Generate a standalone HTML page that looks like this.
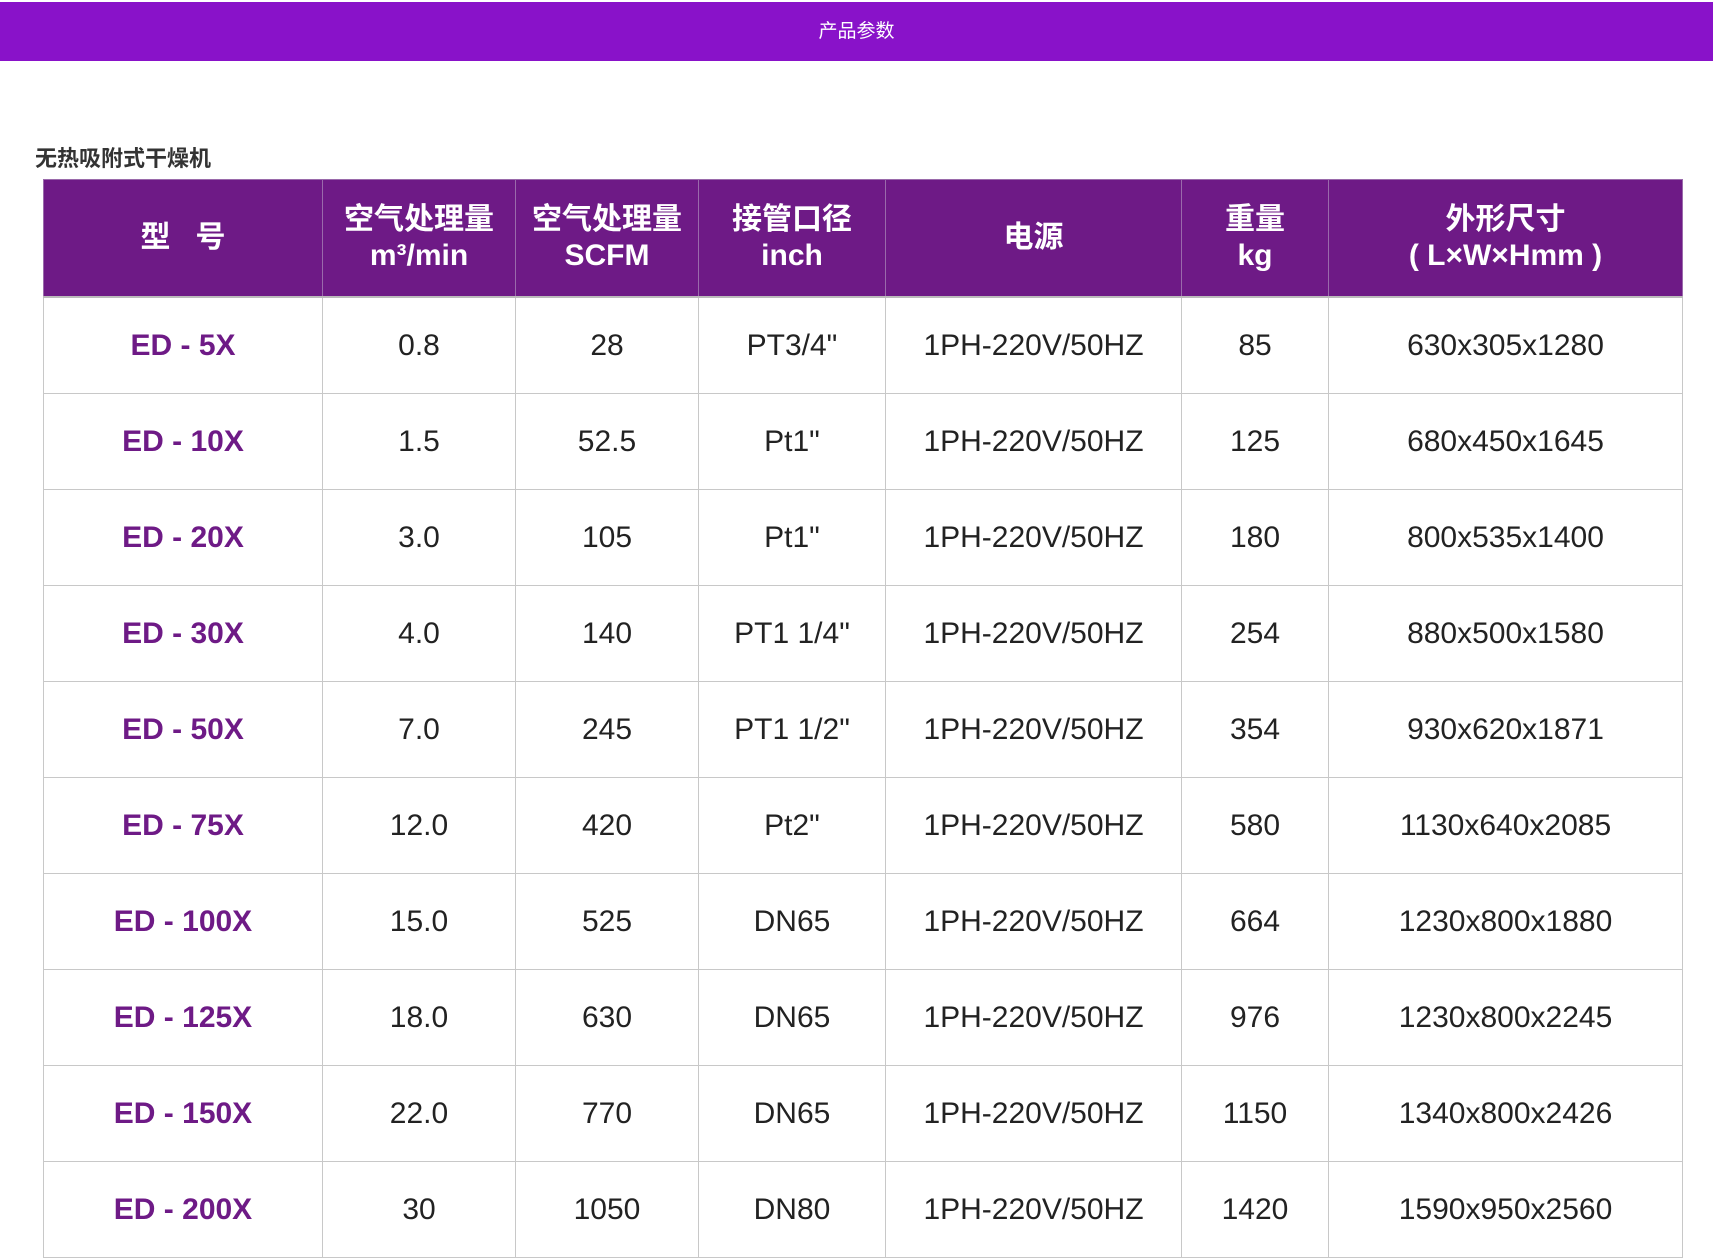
<!DOCTYPE html>
<html><head><meta charset="utf-8"><style>
body{margin:0;background:#fff;width:1713px;height:1258px;overflow:hidden;font-family:"Liberation Sans","Noto Sans CJK SC",sans-serif;}
.bar{position:absolute;top:2px;left:0;width:1713px;height:59px;background:#8912c9;color:#fff;text-align:center;line-height:59px;font-size:19px;}
h2{position:absolute;left:35px;top:141px;margin:0;font-size:22px;font-weight:bold;color:#333;}
table{position:absolute;left:43px;top:179px;border-collapse:collapse;table-layout:fixed;}
td,th{border:1px solid #c8c8c8;text-align:center;padding:0;}
th{background:#6e1a86;color:#fff;font-size:30px;font-weight:bold;line-height:36px;height:116px;border-color:#9a6aab;border-bottom:2px solid #bbb}
td{height:95px;font-size:30px;color:#222;}
td.m{color:#6e1a86;font-weight:bold;}
</style></head><body>
<div class="bar">产品参数</div>
<h2>无热吸附式干燥机</h2>
<table>
<colgroup><col style="width:279px"><col style="width:193px"><col style="width:183px"><col style="width:187px"><col style="width:296px"><col style="width:147px"><col style="width:354px"></colgroup>
<tr><th>型&nbsp;&nbsp;&nbsp;号</th><th>空气处理量<br>m³/min</th><th>空气处理量<br>SCFM</th><th>接管口径<br>inch</th><th>电源</th><th>重量<br>kg</th><th>外形尺寸<br>( L×W×Hmm )</th></tr>
<tr><td class="m">ED - 5X</td><td>0.8</td><td>28</td><td>PT3/4"</td><td>1PH-220V/50HZ</td><td>85</td><td>630x305x1280</td></tr>
<tr><td class="m">ED - 10X</td><td>1.5</td><td>52.5</td><td>Pt1"</td><td>1PH-220V/50HZ</td><td>125</td><td>680x450x1645</td></tr>
<tr><td class="m">ED - 20X</td><td>3.0</td><td>105</td><td>Pt1"</td><td>1PH-220V/50HZ</td><td>180</td><td>800x535x1400</td></tr>
<tr><td class="m">ED - 30X</td><td>4.0</td><td>140</td><td>PT1 1/4"</td><td>1PH-220V/50HZ</td><td>254</td><td>880x500x1580</td></tr>
<tr><td class="m">ED - 50X</td><td>7.0</td><td>245</td><td>PT1 1/2"</td><td>1PH-220V/50HZ</td><td>354</td><td>930x620x1871</td></tr>
<tr><td class="m">ED - 75X</td><td>12.0</td><td>420</td><td>Pt2"</td><td>1PH-220V/50HZ</td><td>580</td><td>1130x640x2085</td></tr>
<tr><td class="m">ED - 100X</td><td>15.0</td><td>525</td><td>DN65</td><td>1PH-220V/50HZ</td><td>664</td><td>1230x800x1880</td></tr>
<tr><td class="m">ED - 125X</td><td>18.0</td><td>630</td><td>DN65</td><td>1PH-220V/50HZ</td><td>976</td><td>1230x800x2245</td></tr>
<tr><td class="m">ED - 150X</td><td>22.0</td><td>770</td><td>DN65</td><td>1PH-220V/50HZ</td><td>1150</td><td>1340x800x2426</td></tr>
<tr><td class="m">ED - 200X</td><td>30</td><td>1050</td><td>DN80</td><td>1PH-220V/50HZ</td><td>1420</td><td>1590x950x2560</td></tr>
</table>
</body></html>
